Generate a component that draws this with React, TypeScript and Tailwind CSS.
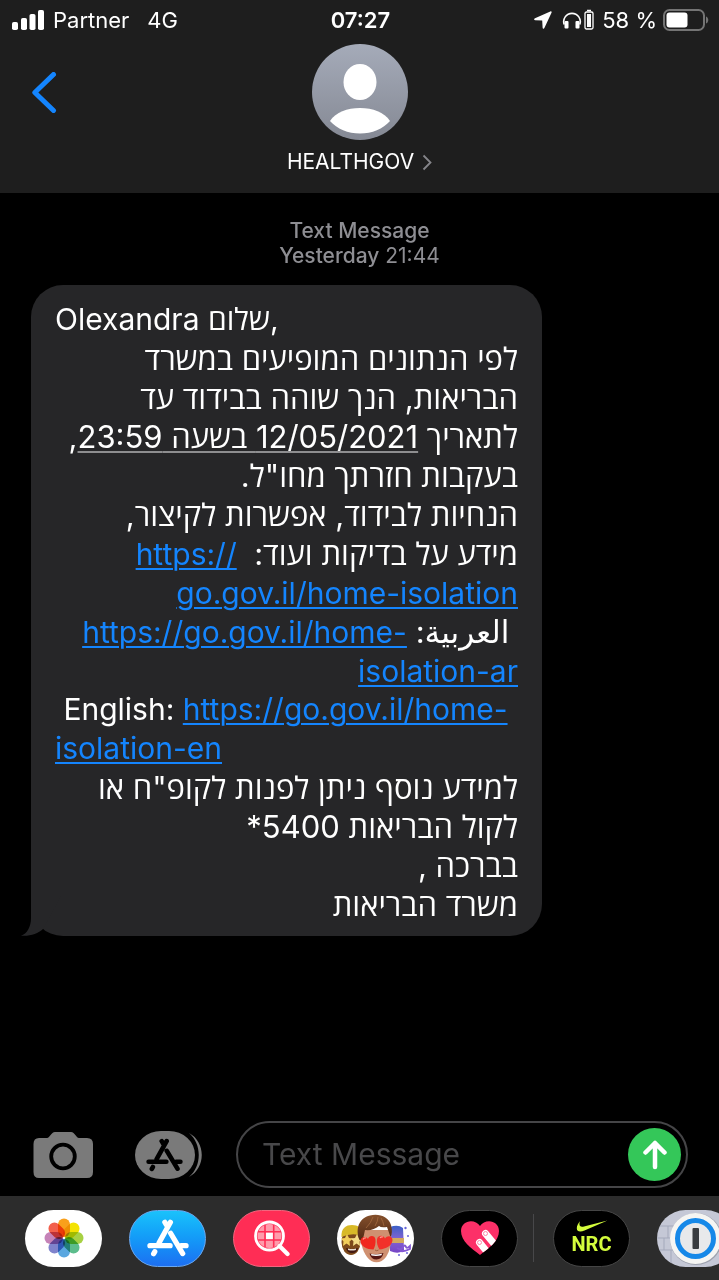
import { ReactNode, useState } from 'react'

interface Line {
  dir: 'ltr' | 'rtl'
  content: ReactNode
}

function Link({ href, children }: { href: string; children: ReactNode }) {
  return (
    <a href={href} dir="ltr" className="text-[30px] text-[#1485fe] underline decoration-2 underline-offset-3">
      {children}
    </a>
  )
}

const HOME = 'https://go.gov.il/home-isolation'

const lines: Line[] = [
  { dir: 'ltr', content: 'Olexandra שלום,' },
  { dir: 'rtl', content: 'לפי הנתונים המופיעים במשרד' },
  { dir: 'rtl', content: 'הבריאות, הנך שוהה בבידוד עד' },
  {
    dir: 'rtl',
    content: (
      <>
        לתאריך{' '}
        <span className="underline decoration-[#8e8e90] decoration-2 underline-offset-3">12/05/2021 בשעה 23:59</span>,
      </>
    ),
  },
  { dir: 'rtl', content: 'בעקבות חזרתך מחו"ל.' },
  { dir: 'rtl', content: 'הנחיות לבידוד, אפשרות לקיצור,' },
  { dir: 'rtl', content: <>מידע על בדיקות ועוד:{'  '}<Link href={HOME}>https://</Link></> },
  { dir: 'rtl', content: <Link href={HOME}>go.gov.il/home-isolation</Link> },
  { dir: 'rtl', content: <>{' '}العربية: <Link href={`${HOME}-ar`}>https://go.gov.il/home-</Link></> },
  { dir: 'rtl', content: <Link href={`${HOME}-ar`}>isolation-ar</Link> },
  { dir: 'ltr', content: <>{' '}English: <Link href={`${HOME}-en`}>https://go.gov.il/home-</Link></> },
  { dir: 'ltr', content: <Link href={`${HOME}-en`}>isolation-en</Link> },
  { dir: 'rtl', content: 'למידע נוסף ניתן לפנות לקופ"ח או' },
  { dir: 'rtl', content: 'לקול הבריאות 5400*' },
  { dir: 'rtl', content: 'בברכה ,' },
  { dir: 'rtl', content: 'משרד הבריאות' },
]

function StatusBar() {
  return (
    <div className="grid grid-cols-[1fr_auto_1fr] items-center h-10 pl-3 pr-2.5 text-[22px]">
      <div className="flex items-center">
        <svg width="33" height="22" viewBox="0 0 33 22" fill="#fff">
          <rect x="0" y="13" width="6" height="8" rx="1.8" />
          <rect x="9" y="9" width="6" height="12" rx="1.8" />
          <rect x="17.500" y="5" width="6" height="16" rx="1.8" />
          <rect x="26" y="1" width="6" height="20" rx="1.8" />
        </svg>
        <span className="ml-2">Partner</span>
        <span className="ml-[18px]">4G</span>
      </div>
      <time className="font-semibold">07:27</time>
      <div className="flex items-center justify-end">
        <svg width="18" height="18" viewBox="0 0 18 18" fill="#fff">
          <path d="M16.300.400 1 7.300C-.300 8-.100 9.200 1.300 9.300L8.200 9.500 8.600 16.500C8.700 18 9.900 18.200 10.500 16.800L17.500 1.700C18 .700 17.400 0 16.300.400Z" />
        </svg>
        <svg className="ml-2.5" width="20" height="20" viewBox="0 0 20 20">
          <path d="M2.200 14.500A8.300 8.300 0 1 1 17.800 14.500" fill="none" stroke="#fff" strokeWidth="1.600" />
          <rect x="2.500" y="11" width="4" height="7.500" rx="1" fill="#fff" />
          <rect x="13.500" y="11" width="4" height="7.500" rx="1" fill="#fff" />
        </svg>
        <svg className="ml-0.5" width="10" height="22" viewBox="0 0 10 22">
          <path d="M3 1.500h4" stroke="#fff" strokeWidth="1.500" />
          <rect x="1" y="3" width="8" height="17" rx="1.500" fill="none" stroke="#fff" strokeWidth="1.300" />
          <rect x="3" y="5" width="4" height="13" fill="#fff" />
        </svg>
        <span className="ml-2">58 %</span>
        <svg className="ml-1.5" width="46" height="22" viewBox="0 0 46 22">
          <rect x="1" y="1" width="40" height="20" rx="5.500" fill="none" stroke="#747474" strokeWidth="2" />
          <rect x="3.500" y="3.500" width="21" height="15" rx="3" fill="#fff" />
          <path d="M43 7.500c3 1 3 6 0 7z" fill="#747474" />
        </svg>
      </div>
    </div>
  )
}

function Header() {
  return (
    <header className="bg-[#1e1e1e] text-white">
      <StatusBar />
      <div className="grid grid-cols-[1fr_auto_1fr] items-start pt-1 pb-[13px]">
        <button aria-label="Back" className="ml-8 mt-7 justify-self-start">
          <svg width="25" height="41" viewBox="0 0 25 41" fill="none" stroke="#1485fe" strokeWidth="5" strokeLinecap="round" strokeLinejoin="round">
            <path d="M21.500 2.500 2.800 20.500 21.500 38.500" />
          </svg>
        </button>
        <button className="flex flex-col items-center">
          <svg width="96" height="96" viewBox="0 0 96 96">
            <defs>
              <linearGradient id="avatar" x1="0" y1="0" x2="0" y2="1">
                <stop offset="0" stopColor="#a5abb9" />
                <stop offset="1" stopColor="#858994" />
              </linearGradient>
            </defs>
            <circle cx="48" cy="48" r="48" fill="url(#avatar)" />
            <ellipse cx="48" cy="38" rx="16.500" ry="18" fill="#fff" />
            <path d="M18 77C24 68 35 64 48 64s24 4 30 13C71 85 60 89.500 48 89.500S25 85 18 77Z" fill="#fff" />
          </svg>
          <span className="flex items-center gap-2 mt-1 leading-9 text-[21px]">
            HEALTHGOV
            <svg width="10" height="17" viewBox="0 0 10 17" fill="none" stroke="#85858a" strokeWidth="1.800">
              <path d="M1.500 1.500 8.500 8.500 1.500 15.500" />
            </svg>
          </span>
        </button>
        <div />
      </div>
    </header>
  )
}

function Bubble() {
  return (
    <div className="relative w-fit ml-[31px] mt-[17px] px-6 pt-[15px] pb-3 rounded-[32px] bg-[#262628] text-white leading-[39px]">
      <svg className="absolute bottom-0 -left-[11px]" width="41" height="40" viewBox="0 0 41 40" fill="#262628">
        <path d="M11 0V22C11 31 7 38 1 39.700C10 40.500 18 37.500 23 33L41 0Z" />
      </svg>
      <div className="relative min-w-[463px]">
        {lines.map((line, i) => (
          <p
            key={i}
            dir={line.dir}
            className={`h-[39px] whitespace-pre ${line.dir === 'rtl' ? 'text-[31px]' : 'text-[30px]'}`}
          >
            {line.content}
          </p>
        ))}
      </div>
    </div>
  )
}

function StoreGlyph({ color, width, height }: { color: string; width: number; height: number }) {
  return (
    <svg width={width} height={height} viewBox="0 0 40 36" fill="none" stroke={color} strokeWidth="5" strokeLinecap="round">
      <path d="M22.300 3 11.500 22.500M7.400 31 6.300 33M17 3 18.500 5.500M22.500 13.500 34 32.800" />
      <path d="M2.800 25.300H22M32.500 25.300H37.200" />
    </svg>
  )
}

function Composer() {
  const [text, setText] = useState('')

  return (
    <form className="flex items-center pl-8 pr-[31px] pb-2" onSubmit={(e) => e.preventDefault()}>
      <button type="button" aria-label="Camera" className="shrink-0">
        <svg width="62" height="48" viewBox="0 0 62 48">
          <path d="M7 7H15C18 7 19 1 23 1H39C43 1 44 7 47 7H55Q61 7 61 13V41Q61 47 55 47H7Q1.500 47 1.500 41V13Q1.500 7 7 7Z" fill="#7a7a7a" />
          <circle cx="31" cy="25.500" r="11.800" fill="none" stroke="#000" strokeWidth="3.800" />
        </svg>
      </button>
      <button type="button" aria-label="Apps" className="relative flex shrink-0 ml-10">
        <svg width="70" height="50" viewBox="0 0 70 50">
          <rect x="1" y="1" width="60" height="48" rx="26" ry="24" fill="#7a7a7a" />
          <path d="M55 3C72 12 72 38 55 47C68 36 68 14 55 3Z" fill="#7a7a7a" />
        </svg>
        <span className="absolute left-3 top-2">
          <StoreGlyph color="#000" width={37} height={34} />
        </span>
      </button>
      <div className="flex flex-1 min-w-0 items-center h-[67px] ml-8 pl-6 pr-[5px] border-2 border-[#454547] rounded-full">
        <input
          aria-label="Text Message"
          placeholder="Text Message"
          value={text}
          onChange={(e) => setText(e.target.value)}
          className="flex-1 min-w-0 bg-transparent text-[30px] text-white placeholder:text-[#48484a] outline-none"
        />
        <button aria-label="Send" className="flex shrink-0 items-center justify-center size-[53px] rounded-full bg-[#34c759]">
          <svg width="24" height="30" viewBox="0 0 24 30" fill="none" stroke="#fff" strokeWidth="4.500" strokeLinecap="round" strokeLinejoin="round">
            <path d="M12 27V3M2.500 12.500 12 3l9.500 9.500" />
          </svg>
        </button>
      </div>
    </form>
  )
}

const petals = ['#f9a01b', '#f4e303', '#a7d143', '#5cbd8c', '#5aa7e0', '#7f83cc', '#c583b8', '#f2604c']

function Photos() {
  return (
    <svg width="40" height="40" viewBox="-20 -20 40 40">
      {petals.map((c, i) => (
        <rect key={c} className="mix-blend-multiply" x="-6" y="-19.500" width="12" height="18.500" rx="6" fill={c} transform={`rotate(${i * 45})`} />
      ))}
    </svg>
  )
}

function ImageSearch() {
  return (
    <svg width="36" height="37" viewBox="0 0 36 37">
      <circle cx="15.500" cy="16" r="12" fill="#ff9bab" />
      <rect x="12" y="12.500" width="7" height="7" fill="#fff" />
      <path d="M11 5v22M19.700 5v22M4 11.700h23M4 20h23" stroke="#ff2d55" strokeWidth="1.600" />
      <circle cx="15.500" cy="16" r="14" fill="none" stroke="#fff" strokeWidth="2.800" />
      <path d="m25.500 26 8 8" stroke="#fff" strokeWidth="4.200" strokeLinecap="round" />
    </svg>
  )
}

function Memoji() {
  return (
    <svg width="77" height="57" viewBox="0 0 77 57">
      <defs>
        <linearGradient id="hair" x1="0" y1="0" x2="0" y2="1">
          <stop offset="0" stopColor="#85502c" />
          <stop offset="1" stopColor="#4e2814" />
        </linearGradient>
        <linearGradient id="robot" x1="0" y1="0" x2="0" y2="1">
          <stop offset="0" stopColor="#3b60c6" />
          <stop offset=".5" stopColor="#8363d2" />
          <stop offset="1" stopColor="#7545c6" />
        </linearGradient>
      </defs>
      <ellipse cx="14" cy="32" rx="9.500" ry="13" fill="#7d4a1b" />
      <path d="M4.500 27C4 18 9 15 15 15s10 3 11 11Q15 22 4.500 27Z" fill="#d8b927" />
      <path d="m10 24 2 4 4 .5-3.500 3 .5 4.500-3.500-2.500L6 36l.5-4.500-2.500-3 4-.5Z" fill="#f2ce5b" />
      <path d="m20 24 2 4 4 .5-3.500 3 .5 4.500-3.500-2.500L16 36l.5-4.500-2.500-3 4-.5Z" fill="#f4dc86" />
      <path d="M9 38q6 2 12 0-1 5-6 5t-6-5Z" fill="#421812" />
      <path d="M11 38.500q4 1 8 0v1.500q-4 1-8 0Z" fill="#e8ddd0" />
      <path d="M53 17q8-3 13 1l1 22q-5 5-14 1Z" fill="url(#robot)" />
      <path d="M53 28h14v5H53z" fill="#d3a95e" />
      <path d="M60 38q4 3 6-1 2-3 3 0 1 2 4-1v3q-6 3-10 2" fill="none" stroke="#8357d3" strokeWidth="1.800" />
      <g fill="#6865d9">
        <circle cx="68.500" cy="18" r="1.200" />
        <circle cx="71" cy="26" r="1" />
        <circle cx="62" cy="45" r="1" />
        <circle cx="70" cy="43" r="1" />
      </g>
      <path d="M24 20h30c1 12-1 21-5 27-5 7-14 7-19 0-5-7-7-15-6-27Z" fill="#cf9070" />
      <path d="M22.500 30C18 19 22 8 33 5.500 42 3 52 7 54 15q2 8-.5 12L50 17q-6 1-8-1-6 5-14 4-1 6-3 11Z" fill="url(#hair)" />
      <path d="M29 18q5-5 7-11M38 16q3-5 3-9M47 16q-1-5-3-8" fill="none" stroke="#a56b40" strokeWidth=".8" />
      <path d="M36.500 39.500C30 39.500 23.500 36 23.500 31c0-4 5-5.500 7.500-2 1-4 7-4 7.500.5.300 4-.500 7-2 10Z" fill="#f0281f" />
      <path d="M42.500 39.500C40.500 36 39.500 33 40 29.500c.500-4.500 6.500-5 8-1 2.500-4 8-2.500 7.500 2-.500 5-6.500 8.500-13 9Z" fill="#f2302a" />
      <path d="M26 29.500q1-2 3-1.500M43 28q1-1.500 3-1" fill="none" stroke="#ff9a90" strokeWidth="1.200" />
      <path d="M38 40q1.800 1.500 3.500 0" fill="none" stroke="#a0603f" />
      <path d="M32.500 43.500q7 1.500 14-.5-1.500 6.500-7 6.500t-7-6Z" fill="#551713" />
      <path d="M34 44q5.500 1 11-.300l-.500 1.500q-5 1.300-10 .300Z" fill="#fff" />
    </svg>
  )
}

function HeartTouch() {
  return (
    <svg width="40" height="36" viewBox="0 0 40 36">
      <defs>
        <clipPath id="heart">
          <path d="M20 35C11 28 1 21 1 11 1 0 15-2 20 6c5-8 19-6 19 5 0 10-10 17-19 24Z" />
        </clipPath>
      </defs>
      <g clipPath="url(#heart)">
        <rect width="40" height="36" fill="#fc3068" />
        <path d="m25.500 13.500 15 18M19.500 22.500l13 16" stroke="#fff" strokeWidth="7" strokeLinecap="round" />
        <circle cx="25.500" cy="13.500" r="2" fill="none" stroke="#fc8aac" />
        <circle cx="19.500" cy="22.500" r="2" fill="none" stroke="#fc8aac" />
      </g>
    </svg>
  )
}

function OnePassword() {
  return (
    <svg width="77" height="57" viewBox="0 0 77 57">
      <rect width="77" height="57" fill="#c5c8d6" />
      <path d="M0 16h20M0 28h20M0 40h20M11 16v12M7 28v12M14 40v17" stroke="#a4a9bb" />
      <circle cx="39" cy="29" r="26" fill="#9da1ae" />
      <circle cx="38.500" cy="28.500" r="25.500" fill="#f5f5f3" />
      <circle cx="38.500" cy="28.500" r="18" fill="#e8e9eb" stroke="#1688e8" strokeWidth="5" />
      <rect x="35.500" y="18" width="6.500" height="21" rx="1" fill="#393c40" />
    </svg>
  )
}

const pill = 'flex shrink-0 items-center justify-center w-[77px] h-[57px] rounded-full overflow-hidden'

function AppStrip() {
  return (
    <nav className="flex items-center gap-[27px] h-[84px] pl-[25px] bg-[#2c2c2c] overflow-hidden">
      <button aria-label="Photos" className={`${pill} bg-white`}>
        <Photos />
      </button>
      <button aria-label="App Store" className={`${pill} bg-linear-to-b from-[#1bc2fb] to-[#1d6ff2] border border-[#6aa9f2]`}>
        <StoreGlyph color="#fff" width={42} height={38} />
      </button>
      <button aria-label="Images" className={`${pill} bg-[#ff2d55] border border-[#f3657e]`}>
        <ImageSearch />
      </button>
      <button aria-label="Memoji" className={`${pill} bg-white`}>
        <Memoji />
      </button>
      <button aria-label="Digital Touch" className={`${pill} bg-black border border-[#454545]`}>
        <HeartTouch />
      </button>
      <div className="flex shrink-0 items-center gap-[27px] -ml-3">
        <div className="w-px h-12 bg-[#48484a]" />
        <button aria-label="Nike Run Club" className={`${pill} flex-col -ml-2 bg-black border border-[#454545] text-[#d4fc3c]`}>
          <svg width="32" height="12" viewBox="0 0 32 12" fill="currentColor">
            <path d="M31.500.500 8.500 10.500C4 12.500.800 11.500.800 8.300.800 6 2 3.500 4 1.300 2.500 5.500 4 7.500 8 6.500Z" />
          </svg>
          <span className="font-[Roboto,sans-serif] font-bold text-xl leading-6">NRC</span>
        </button>
        <button aria-label="1Password" className={pill}>
          <OnePassword />
        </button>
      </div>
    </nav>
  )
}

export default function App() {
  return (
    <div className="flex flex-col min-h-screen bg-black font-[Inter,'Open_Sans','DejaVu_Sans',sans-serif]">
      <Header />
      <main className="flex-1">
        <div className="pt-[25px] text-center text-[21px] leading-[25px] text-[#8e8e93]">
          <p className="font-medium">Text Message</p>
          <p>
            <span className="font-medium">Yesterday</span> 21:44
          </p>
        </div>
        <Bubble />
      </main>
      <Composer />
      <AppStrip />
    </div>
  )
}
